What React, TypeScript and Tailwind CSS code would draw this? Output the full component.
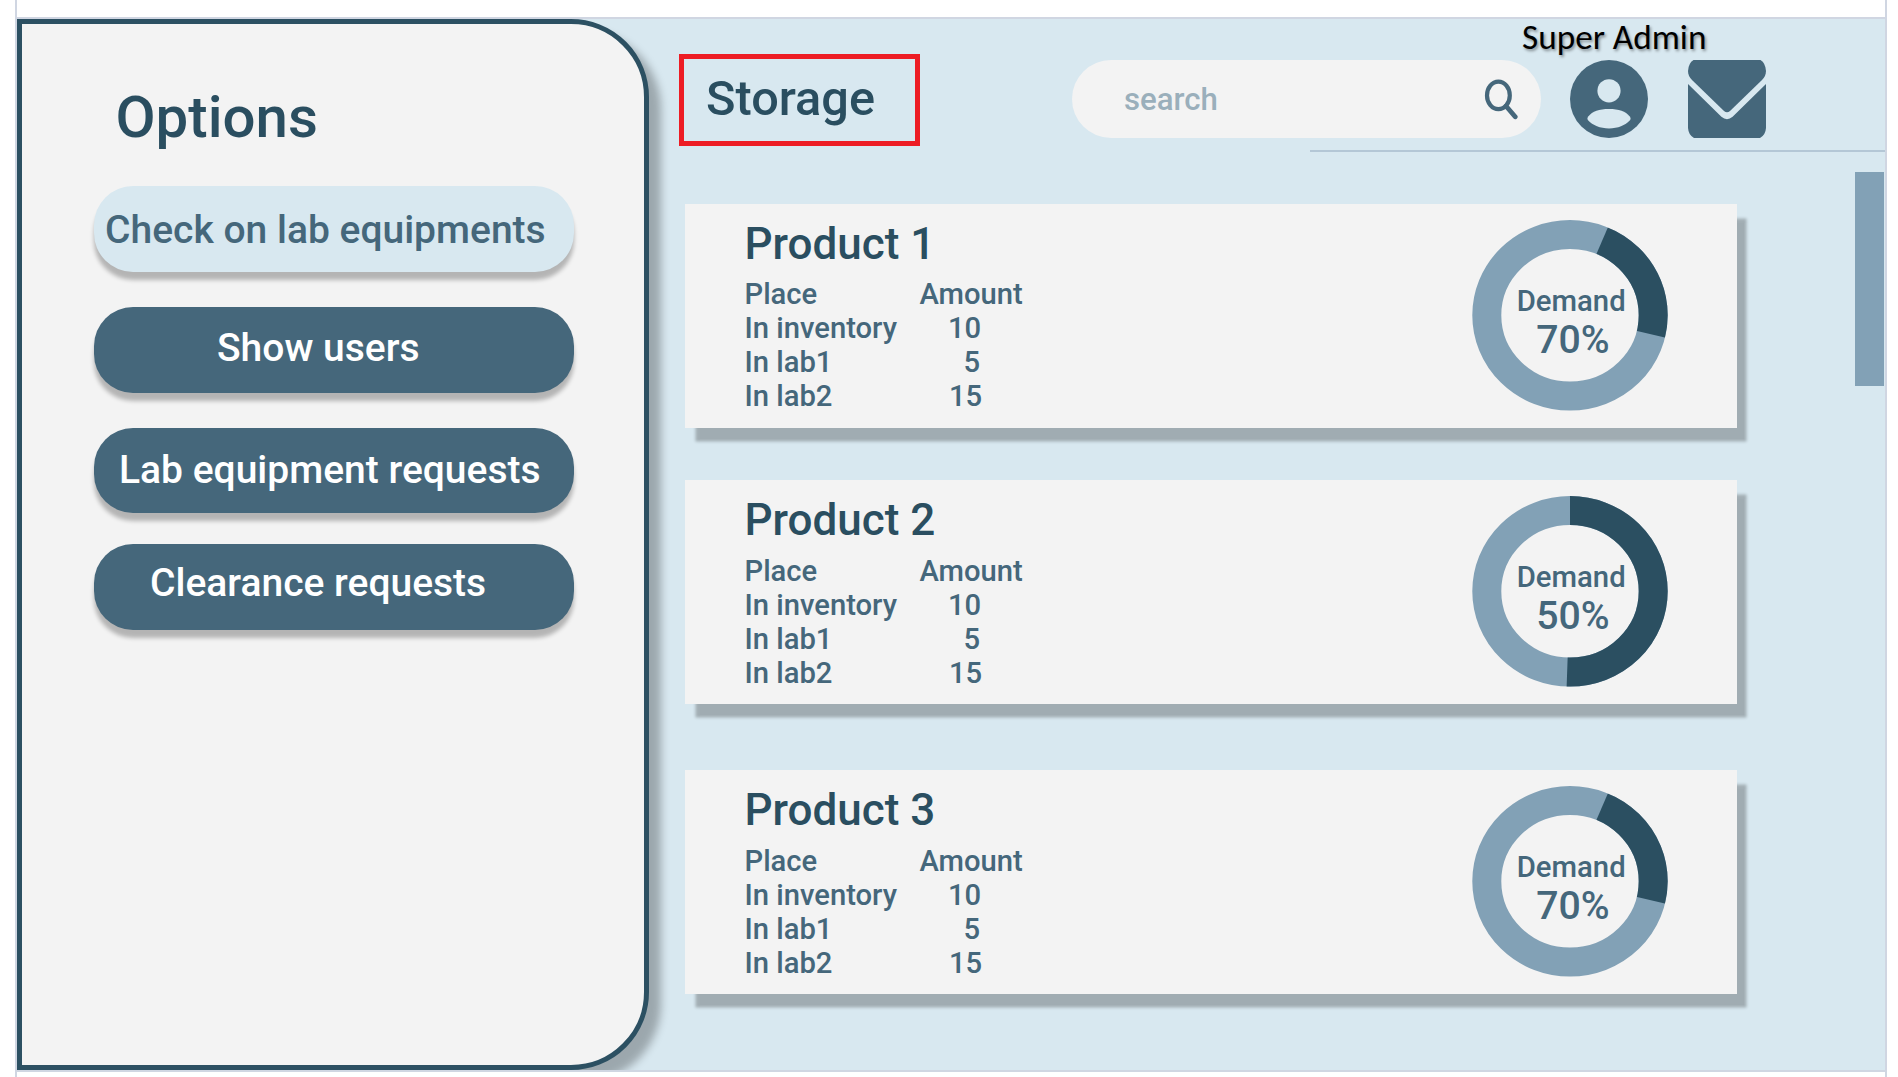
type Option = { label: string; className: string };

const options: Option[] = [
  { label: 'Check on lab equipments', className: 'h-[86px] bg-[#d8e8f0] pl-[11px] leading-[88px] text-[#45677b]' },
  { label: 'Show users', className: 'mt-[35px] h-[86px] bg-[#45677b] pl-[123px] leading-[82px] text-white' },
  { label: 'Lab equipment requests', className: 'mt-[35px] h-[85px] bg-[#45677b] pl-[25px] leading-[84px] text-white' },
  { label: 'Clearance requests', className: 'mt-[31px] h-[86px] bg-[#45677b] pl-[56px] leading-[78px] text-white' },
];

type Product = { name: string; demand: string; wedge: string; className: string };

const quarterWedge = '98,95.3 173,-78.7 292.8,141 98,95.3';
const halfWedge = '98,95.3 98,-10 220,-10 220,200 94.3,200';

const products: Product[] = [
  { name: 'Product 1', demand: '70%', wedge: quarterWedge, className: 'mt-[52px]' },
  { name: 'Product 2', demand: '50%', wedge: halfWedge, className: 'mt-[52.4px]' },
  { name: 'Product 3', demand: '70%', wedge: quarterWedge, className: 'mt-[66px]' },
];

const stock = [
  { place: 'In inventory', amount: '10', className: 'pl-[28.5px]' },
  { place: 'In lab1', amount: '5', className: 'pl-[44px]' },
  { place: 'In lab2', amount: '15', className: 'pl-[29.5px]' },
];

function Sidebar() {
  return (
    <aside className="relative z-10 h-[1051px] w-[632px] shrink-0 rounded-r-[78px] border-[5px] border-[#2c5062] bg-[#f3f3f3] pt-[60px] shadow-[12px_12px_8px_rgba(0,0,0,0.28)] [clip-path:inset(0_-30px_0_0)]">
      <h1 className="ml-[93.5px] text-[58.2px] leading-[67px] font-medium text-[#2a4e60]">Options</h1>
      <nav className="mt-[35px] ml-[72px] flex w-[479.5px] flex-col">
        {options.map((o) => (
          <a
            key={o.label}
            className={`block rounded-[39px] text-[39px] font-medium whitespace-nowrap shadow-[0_8px_4px_rgba(0,0,0,0.26)] ${o.className}`}
          >
            {o.label}
          </a>
        ))}
      </nav>
    </aside>
  );
}

function Header() {
  return (
    <header className="flex h-[131px] items-start">
      <div className="mt-[35px] ml-[30px] h-[92px] w-[241px] shrink-0 border-[5px] border-[#ed1c24] pl-[22px]">
        <h2 className="text-[48.7px] leading-[80px] font-medium text-[#2a4e60]">Storage</h2>
      </div>
      <div className="mt-[40.5px] ml-[152px] flex h-[78px] w-[469px] shrink-0 justify-between rounded-full bg-[#f3f3f3] pl-[52px]">
        <span className="text-[31.2px] leading-[80px] font-medium text-[#9aafbb]">search</span>
        <svg className="mt-[19px] mr-[23px] h-[41px] w-[34px]" viewBox="0 0 34 41" fill="none" stroke="#45677b">
          <ellipse cx="14.4" cy="16.4" rx="11.4" ry="13.7" strokeWidth="4.2" />
          <path d="M22 27 L31.2 37.8" strokeWidth="4.8" strokeLinecap="round" />
        </svg>
      </div>
      <div className="relative mt-[40.5px] ml-[29px] h-[78px] w-[78px] shrink-0">
        <svg className="h-full w-full" viewBox="0 0 78 78">
          <circle cx="39" cy="39" r="39" fill="#45677b" />
          <circle cx="39" cy="30.8" r="11.6" fill="#d8e8f0" />
          <path
            d="M17.8 60 C17.2 59 17.3 57.8 18.2 56.6 C22.5 51 29 49 39 49 C49 49 55.5 51 59.8 56.6 C60.7 57.8 60.8 59 60.2 60 C55 65.6 48 68.4 39 68.4 C30 68.4 23 65.6 17.8 60 Z"
            fill="#d8e8f0"
          />
        </svg>
        <span className="absolute -top-[45px] -left-[48px] pr-1 font-['Carlito','Lato',sans-serif] text-[35.2px] leading-[44px] whitespace-nowrap text-black [text-shadow:1.5px_1.5px_3px_rgba(0,0,0,0.4)]">
          Super Admin
        </span>
      </div>
      <svg className="mt-[40.5px] ml-[39.8px] h-[78px] w-[78px] shrink-0" viewBox="0 0 78 78" fill="#45677b">
        <path d="M0 11 Q0.5 3 5.5 0 H72.5 Q77.5 3 78 11 C78 14.5 76.5 17.5 74 20 L42 51 Q39 53.5 36 51 L4 20 C1.5 17.5 0 14.5 0 11 Z" />
        <path d="M0 24 L33.4 56.8 Q39 61.5 44.6 56.8 L78 24 V68 Q77.5 75 72 78 H6 Q0.5 75 0 68 Z" />
      </svg>
    </header>
  );
}

function ProductCard({ product, id }: { product: Product; id: string }) {
  return (
    <article
      className={`flex h-[224px] w-[1052px] items-start justify-between bg-[#f3f3f3] pl-[59.5px] shadow-[9.5px_13.5px_3px_rgba(0,0,0,0.26)] ${product.className}`}
    >
      <div className="text-[#45677b]">
        <h3 className="mt-[14px] text-[44px] leading-[53px] font-medium text-[#2a4e60]">{product.name}</h3>
        <div className="mt-[6.2px] grid grid-cols-[175px_auto] text-[29.2px] leading-[34px] font-medium">
          <span>Place</span>
          <span>Amount</span>
          {stock.map((s) => (
            <div key={s.place} className="contents">
              <span>{s.place}</span>
              <span className={s.className}>{s.amount}</span>
            </div>
          ))}
        </div>
      </div>
      <div className="relative mt-[16px] mr-[68.8px] h-[191px] w-[196px]">
        <svg className="h-full w-full" viewBox="0 0 196 191" fill="none" strokeWidth="29">
          <clipPath id={id}>
            <polygon points={product.wedge} />
          </clipPath>
          <ellipse cx="98" cy="95.3" rx="83.2" ry="80.8" stroke="#82a1b6" />
          <ellipse cx="98" cy="95.3" rx="83.2" ry="80.8" stroke="#2b4f61" clipPath={`url(#${id})`} />
        </svg>
        <div className="absolute inset-0 font-medium whitespace-nowrap text-[#45677b]">
          <p className="mt-[63.7px] ml-[44.5px] text-[29.3px] leading-[34px]">Demand</p>
          <p className="mt-[2.3px] ml-[64px] text-[39.2px] leading-[40px]">{product.demand}</p>
        </div>
      </div>
    </article>
  );
}

export default function App() {
  return (
    <div className="h-[1077px] w-[1898px] overflow-hidden bg-white pl-[15px] font-['Roboto',sans-serif]">
      <div className="h-full w-[1872px] border-x-2 border-[#d0d6e2] pt-[17px]">
        <div className="h-[1055px] border-y-2 border-[#d0d6e2]">
          <div className="flex h-[1051px] bg-[#d8e8f0]">
            <Sidebar />
            <main className="flex min-w-0 flex-1 flex-col">
              <Header />
              <div className="h-[2px] w-[575px] shrink-0 self-end bg-[#b4c7d6]" />
              <div className="flex items-start justify-between pr-[1.5px] pl-[36px]">
                <section className="flex flex-col">
                  {products.map((p, i) => (
                    <ProductCard key={p.name} product={p} id={`demand-${i}`} />
                  ))}
                </section>
                <div className="mt-[20px] h-[213.5px] w-[29px] bg-[#82a1b6]" />
              </div>
            </main>
          </div>
        </div>
      </div>
    </div>
  );
}
